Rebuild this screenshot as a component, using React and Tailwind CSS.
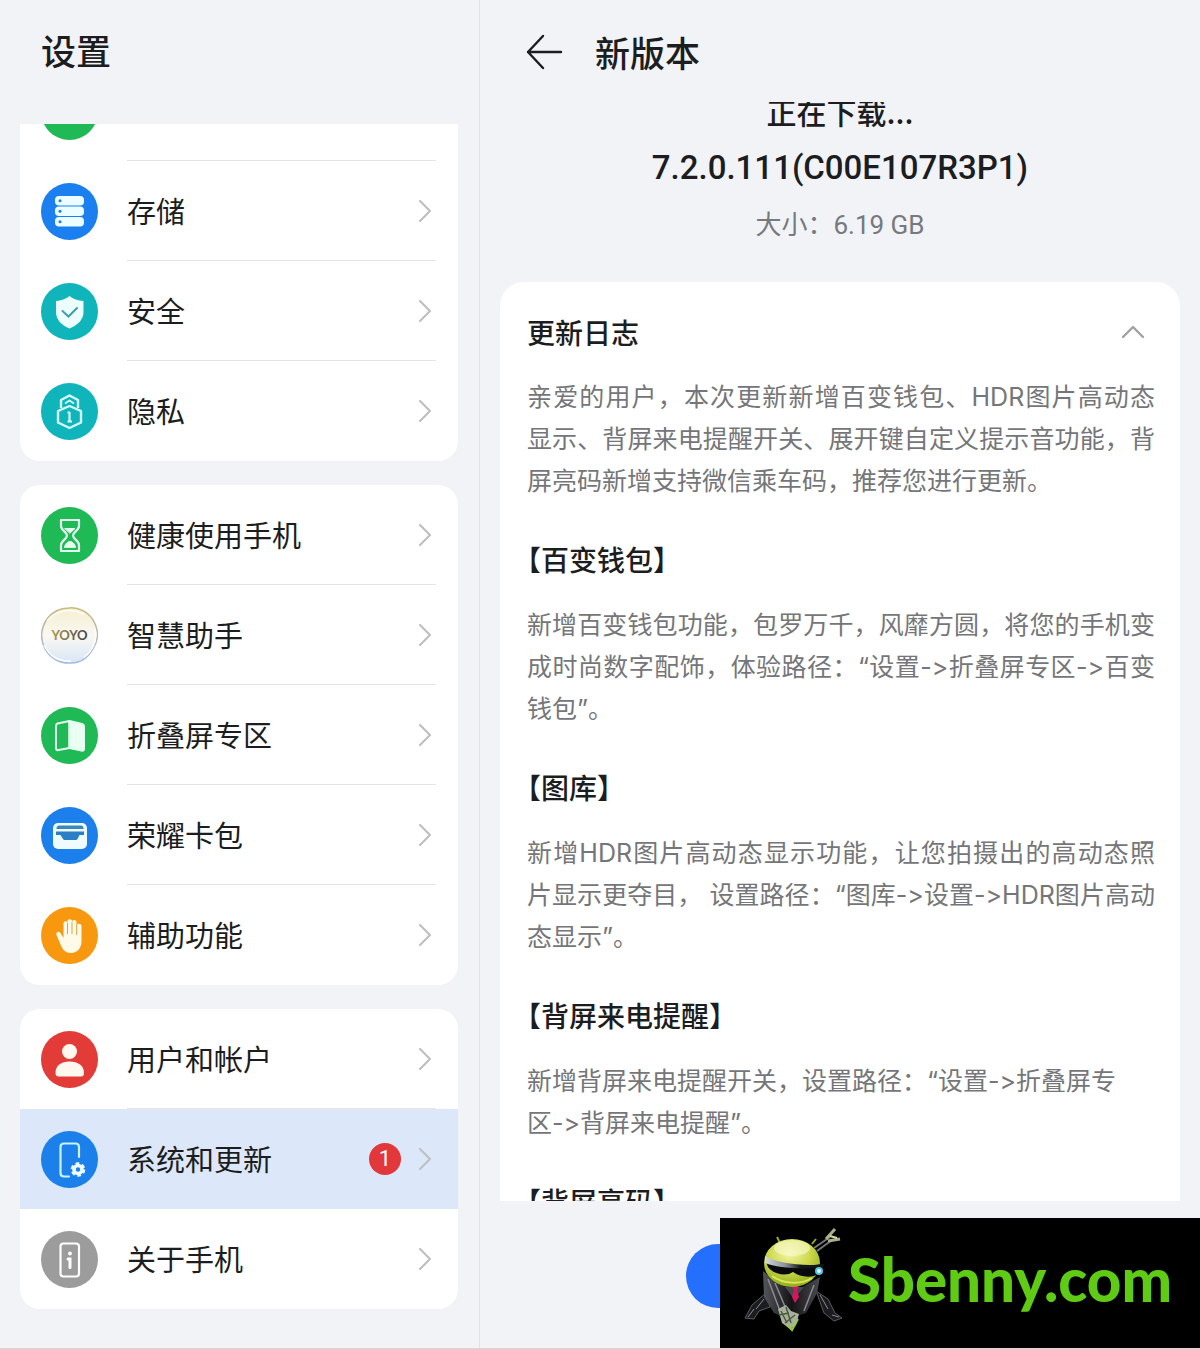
import { useState } from 'react';
import clsx from 'clsx';

const StorageIcon = () => (
  <svg viewBox="0 0 57 57" className="size-full">
    {[13, 23.5, 34].map((y) => (
      <g key={y}>
        <rect x="14" y={y} width="29" height="9.500" rx="4" fill="#ecfdff" />
        <circle cx="19" cy={y + 4.7} r="1.500" fill="#1b7fe6" />
      </g>
    ))}
  </svg>
);

const ShieldIcon = () => (
  <svg viewBox="0 0 57 57" className="size-full">
    <path d="M28.500 13C32 16 37 17.500 42.500 18V29C42.500 37 36 42.500 28.500 45.500C21 42.500 15 37 15 29V18C20 17.500 25 16 28.500 13Z" fill="#ecfefe" />
    <path d="M21.500 28L27.500 33.500L36 25" fill="none" stroke="#3f9ea6" strokeWidth="2" strokeLinecap="round" />
  </svg>
);

const PrivacyIcon = () => (
  <svg viewBox="0 0 57 57" className="size-full" fill="none" stroke="#d5fbfc" strokeWidth="2.400" strokeLinejoin="round">
    <path d="M20 25V17L28.500 12.500L37 17V25" />
    <path d="M24 20.500L28.500 17.500L33 20.500" strokeWidth="1.800" />
    <path d="M28.500 23L40 28V39.500L28.500 45L17 39.500V28Z" />
    <path d="M28.500 29V38.500M26.500 29.500H29M26.500 38.500H31" strokeWidth="2.200" />
  </svg>
);

const HourglassIcon = () => (
  <svg viewBox="0 0 57 57" className="size-full" fill="none" stroke="#e4fff0" strokeWidth="2.200" strokeLinecap="round" strokeLinejoin="round">
    <path d="M20 13H38V19C38 23.500 32 25 32 28.500C32 32 38 34 38 38V44H20V38C20 34 26 32 26 28.500C26 25 20 23.500 20 19Z" />
    <path d="M24 21.500H34L29 26Z" fill="#e4fff0" strokeWidth="1" />
    <path d="M23.500 40C24 36.500 27 34.500 29 34.500C31 34.500 34 36.500 34.500 40Z" fill="#e4fff0" strokeWidth="1" />
  </svg>
);

const YoyoIcon = () => (
  <svg viewBox="0 0 57 57" className="size-full">
    <defs>
      <linearGradient id="orb" x1="0" y1="0" x2="0" y2="1">
        <stop offset="0" stopColor="#f6efd0" />
        <stop offset="0.500" stopColor="#faf8f2" />
        <stop offset="1" stopColor="#d8e6f6" />
      </linearGradient>
      <linearGradient id="orbRing" x1="0" y1="0" x2="0" y2="1">
        <stop offset="0" stopColor="#c9b97c" />
        <stop offset="0.500" stopColor="#b7b8ba" />
        <stop offset="1" stopColor="#9fbbe0" />
      </linearGradient>
      <linearGradient id="orbText" x1="0" y1="0" x2="1" y2="0">
        <stop offset="0" stopColor="#b09a4e" />
        <stop offset="1" stopColor="#3e4148" />
      </linearGradient>
    </defs>
    <path d="M28 1C38 0 47 5 52 13C57 21 58 31 53 40C48 50 40 56 30 56C19 57 9 51 4 42C-1 32 0 21 6 12C11 5 19 1 28 1Z" fill="url(#orb)" stroke="url(#orbRing)" strokeWidth="1.500" />
    <path d="M6 14C14 4 29 0 43 7M3 38C8 49 18 55 30 54M54 22C57 33 51 45 43 50" fill="none" stroke="#fff" strokeWidth="1.500" />
    <text x="28.500" y="33" textAnchor="middle" fontSize="13" fontWeight="700" fontFamily="Lato, sans-serif" fill="url(#orbText)">YOYO</text>
  </svg>
);

const FoldIcon = () => (
  <svg viewBox="0 0 57 57" className="size-full" stroke="#e4fff0" strokeWidth="2" strokeLinejoin="round">
    <path d="M28.500 14L16.500 16.500C15.500 17 15 17.500 15 19V41C15 43 16 43.500 17.500 43L28.500 41Z" fill="none" />
    <path d="M28.500 14L41 17C42.500 17.500 43 18 43 19.500V42C43 43.500 42 44 40.500 43.500L28.500 41Z" fill="#eafff2" />
  </svg>
);

const WalletIcon = () => (
  <svg viewBox="0 0 57 57" className="size-full">
    <rect x="12" y="16" width="34" height="26" rx="5" fill="#eefcff" />
    <path d="M15.500 21C15.500 19.500 17 18.500 18 18.500H40C41.500 18.500 42.500 19.500 42.500 21V22H15.500Z" fill="#3a86bd" />
    <path d="M15 24.500H43V28H38.500L36.500 32C36 32.800 35.500 33 34.500 33H24C23 33 22.500 32.800 22 32L19.500 28H15Z" fill="#2b7fc4" />
  </svg>
);

const HandIcon = () => (
  <svg viewBox="0 0 57 57" className="size-full" fill="#fffbe8">
    <path d="M22.500 28V16.500C22.500 13.500 26.500 13.500 26.500 16.500V14C26.500 11.500 31 11.500 31 14V15C31 12.200 35.500 12.200 35.500 15V18.500C35.500 16 40.500 16 40.500 19V34C40.500 41 36.500 46 30 46C24.500 46 21.500 42.500 19.500 37.500L15.500 28C14.500 25 17.500 23.500 19.500 26L22.500 31Z" />
    <path d="M26.500 16V27M31 15V27M35.700 17V28" stroke="#e3a13c" strokeWidth="1" fill="none" />
  </svg>
);

const UserIcon = () => (
  <svg viewBox="0 0 57 57" className="size-full" fill="#fff8ee">
    <circle cx="28.500" cy="20.500" r="7.500" />
    <path d="M14.500 42C14.500 34.500 20 30.500 28.500 30.500C37 30.500 43 34.500 43 42C43 44.500 42 45.500 40 45.500H17.500C15.500 45.500 14.500 44.500 14.500 42Z" />
  </svg>
);

const UpdateIcon = () => (
  <svg viewBox="0 0 57 57" className="size-full" fill="none" stroke="#c9f4ff" strokeWidth="2.200" strokeLinecap="round">
    <path d="M38 26V16C38 13.500 37 12.500 34.500 12.500H23C20.500 12.500 19.500 13.500 19.500 16V42C19.500 44.500 20.500 45.500 23 45.500H28" />
    <circle cx="37" cy="38.500" r="4" stroke="#effbff" strokeWidth="3.600" />
    <circle cx="37" cy="38.500" r="6" stroke="#effbff" strokeWidth="2.600" strokeLinecap="butt" strokeDasharray="3.642 2.642" />
  </svg>
);

const AboutIcon = () => (
  <svg viewBox="0 0 57 57" className="size-full" fill="none" stroke="#fff" strokeWidth="2.200" strokeLinecap="round">
    <rect x="19.500" y="12.500" width="18.500" height="33" rx="3" />
    <path d="M27 28H29V36.500" strokeWidth="3" />
    <circle cx="29" cy="22.500" r="1.200" fill="#fff" strokeWidth="1.500" />
  </svg>
);

const GROUPS = [
  [
    { id: 'first', label: '', color: 'bg-[#1fb955]', Icon: null },
    { id: 'storage', label: '存储', color: 'bg-[#1b7ff0]', Icon: StorageIcon },
    { id: 'security', label: '安全', color: 'bg-[#0fb5ba]', Icon: ShieldIcon },
    { id: 'privacy', label: '隐私', color: 'bg-[#0fb5ba]', Icon: PrivacyIcon },
  ],
  [
    { id: 'health', label: '健康使用手机', color: 'bg-[#1fb955]', Icon: HourglassIcon },
    { id: 'assistant', label: '智慧助手', color: 'bg-transparent', Icon: YoyoIcon },
    { id: 'fold', label: '折叠屏专区', color: 'bg-[#1fb955]', Icon: FoldIcon },
    { id: 'wallet', label: '荣耀卡包', color: 'bg-[#1b7fec]', Icon: WalletIcon },
    { id: 'access', label: '辅助功能', color: 'bg-[#f8980f]', Icon: HandIcon },
  ],
  [
    { id: 'account', label: '用户和帐户', color: 'bg-[#e23b38]', Icon: UserIcon },
    { id: 'system', label: '系统和更新', color: 'bg-[#1b80ea]', Icon: UpdateIcon, badge: 1 },
    { id: 'about', label: '关于手机', color: 'bg-[#9c9c9c]', Icon: AboutIcon },
  ],
];

const LOG = [
  {
    lines: [
      '亲爱的用户，本次更新新增百变钱包、HDR图片高动态',
      '显示、背屏来电提醒开关、展开键自定义提示音功能，背',
      '屏亮码新增支持微信乘车码，推荐您进行更新。',
    ],
  },
  {
    title: '【百变钱包】',
    lines: [
      '新增百变钱包功能，包罗万千，风靡方圆，将您的手机变',
      '成时尚数字配饰，体验路径：“设置->折叠屏专区->百变',
      '钱包”。',
    ],
  },
  {
    title: '【图库】',
    lines: [
      '新增HDR图片高动态显示功能，让您拍摄出的高动态照',
      '片显示更夺目， 设置路径：“图库->设置->HDR图片高动',
      '态显示”。',
    ],
  },
  {
    title: '【背屏来电提醒】',
    lines: ['新增背屏来电提醒开关，设置路径：“设置->折叠屏专', '区->背屏来电提醒”。'],
    ragged: true,
  },
  { title: '【背屏亮码】', lines: [] },
];

function SettingsRow({ item, selected, last, onSelect }) {
  const { label, color, Icon, badge } = item;
  return (
    <button
      type="button"
      onClick={onSelect}
      className={clsx('flex h-[100px] w-full items-center gap-[29px] pl-[21px] text-left', selected && 'bg-[#dce8f9]')}
    >
      <span className={clsx('size-[57px] shrink-0 rounded-full', color)}>{Icon && <Icon />}</span>
      <span className={clsx('mr-[22px] flex h-full flex-1 items-center border-b', last || selected ? 'border-transparent' : 'border-[#e4e4e6]')}>
        <span className="flex-1 text-[29px] text-[#1c1d20]">{label}</span>
        {badge && (
          <span className="mr-4 flex size-8 items-center justify-center rounded-full bg-[#e2373b] font-[Roboto,sans-serif] text-[22px] text-white">
            {badge}
          </span>
        )}
        {label && (
          <svg viewBox="0 0 16 24" className="mr-[3px] h-6 w-4" fill="none" stroke="#bfc0c3" strokeWidth="2.200" strokeLinecap="round" strokeLinejoin="round">
            <path d="M3 2L13 12L3 22" />
          </svg>
        )}
      </span>
    </button>
  );
}

const Mascot = () => (
  <svg viewBox="0 0 104 112" className="h-28 w-[104px] shrink-0">
    <defs>
      <radialGradient id="head" cx="0.450" cy="0.300" r="0.750">
        <stop offset="0" stopColor="#f4f4a8" />
        <stop offset="0.500" stopColor="#cdd84a" />
        <stop offset="1" stopColor="#86a516" />
      </radialGradient>
      <linearGradient id="visor" x1="0" y1="0" x2="1" y2="0">
        <stop offset="0" stopColor="#d5dae2" />
        <stop offset="0.350" stopColor="#8b8f98" />
        <stop offset="0.600" stopColor="#15161a" />
      </linearGradient>
      <linearGradient id="suit" x1="0" y1="0" x2="1" y2="0">
        <stop offset="0" stopColor="#55565b" />
        <stop offset="0.500" stopColor="#141416" />
        <stop offset="1" stopColor="#4a4b50" />
      </linearGradient>
    </defs>
    {/* raised hand behind the head */}
    <path d="M70 21L86 10M73 24L88 13" stroke="#73767c" strokeWidth="2" />
    <path d="M82 12L91 2M84 14L96 12" stroke="#a9b08c" strokeWidth="3" />
    <path d="M86 9L93 11" stroke="#d6dba6" strokeWidth="2" />
    {/* legs and arms */}
    <path d="M22 66L8 78L1 91L10 92L15 84L26 80Z" fill="#1b1c1f" stroke="#5b5c61" />
    <path d="M10 82L4 90M20 72L12 82" stroke="#8b8c92" />
    <path d="M72 64L84 72L91 86L98 91L90 94L80 86Z" fill="#1b1c1f" stroke="#5b5c61" />
    <path d="M76 68L84 82M88 88L95 90" stroke="#8b8c92" />
    <path d="M19 44L20 70L30 86L44 92L62 86L73 66L76 50L58 60L36 58Z" fill="url(#suit)" />
    <path d="M24 52L36 84M31 56L42 82M70 58L60 84" stroke="#8b8c92" strokeWidth="1.500" />
    <path d="M41 60L50 72L60 60Z" fill="#48494e" />
    <path d="M46 58H55L53 63L55 70L51 76L48 70L50 63Z" fill="#d4165d" />
    {/* clasped hands */}
    <path d="M34 82L42 78L47 84L55 87L52 98L46 102L38 96Z" fill="#a8b19d" />
    <path d="M37 84L43 96M42 80L47 96M35 88L45 86M41 96L51 88" stroke="#4b5a3d" strokeWidth="1.500" />
    <path d="M43 98L48 103L54 92" fill="none" stroke="#9acb38" strokeWidth="2" />
    {/* head */}
    <path d="M37 18L33 10M68 17L72 12" stroke="#91aa32" strokeWidth="2" />
    <ellipse cx="48" cy="36" rx="28" ry="24" fill="url(#head)" />
    <ellipse cx="48" cy="21" rx="18" ry="8" fill="#fafbd0" opacity="0.600" />
    <path d="M21 32C32 38 60 41 78 37L76 46C68 52 56 50 49 45C42 50 29 47 24 40Z" fill="#08090c" />
    <path d="M21 29C32 36 60 40 80 37L79 40C58 43 34 41 21 36Z" fill="url(#visor)" />
    <path d="M28 49C39 57 57 58 68 51" fill="none" stroke="#dce65a" strokeWidth="2" />
    <circle cx="75" cy="44" r="4" fill="#53bfe6" />
    <circle cx="75" cy="44" r="2" fill="#e2faff" />
  </svg>
);

export default function App() {
  const [selected, setSelected] = useState('system');
  const [open, setOpen] = useState(true);

  return (
    <div className="relative flex h-screen overflow-hidden border-b border-[#d6d7d9] bg-[#f1f3f7] font-['Noto_Sans_CJK_SC',sans-serif] text-[#1c1d20]">
      <aside className="flex w-2/5 flex-col border-r border-[#e0e2e6] pr-[21px] pl-5">
        <h1 className="flex h-[124px] shrink-0 items-start px-[21px] pt-[26px] text-[35px] leading-[48px] font-medium">设置</h1>
        {/* list is scrolled to its end */}
        <nav className="flex min-h-0 flex-1 flex-col justify-end gap-6 overflow-hidden pb-[39px]">
          {GROUPS.map((group, g) => (
            <div key={g} className="shrink-0 overflow-hidden rounded-[20px] bg-white">
              {group.map((item, i) => (
                <SettingsRow
                  key={item.id}
                  item={item}
                  selected={item.id === selected}
                  last={i === group.length - 1}
                  onSelect={() => setSelected(item.id)}
                />
              ))}
            </div>
          ))}
        </nav>
      </aside>

      <main className="flex min-w-0 flex-1 flex-col px-5">
        <header className="flex h-[102px] shrink-0 items-start gap-8 pt-7 pl-[26px]">
          <button type="button" aria-label="返回" className="flex h-12 items-center">
            <svg viewBox="0 0 37 36" className="h-9 w-[37px]" fill="none" stroke="#1c1d20" strokeWidth="2.400" strokeLinecap="round" strokeLinejoin="round">
              <path d="M17 2L2 18L17 34M2 18H35" />
            </svg>
          </button>
          <h2 className="text-[35px] leading-[48px] font-medium">新版本</h2>
        </header>

        <div className="min-h-0 flex-1 overflow-hidden">
          <div className="-mt-3 mb-9 flex flex-col items-center gap-[15px] leading-[42px]">
            <p className="text-[30px] font-medium">正在下载...</p>
            <p className="font-[Roboto,sans-serif] text-[33px] font-medium">7.2.0.111(C00E107R3P1)</p>
            <p className="font-[Roboto,'Noto_Sans_CJK_SC',sans-serif] text-[26px] text-[#77797d]">大小：6.19 GB</p>
          </div>

          <section className="rounded-t-[24px] bg-white pt-7 pr-[25px] pb-10 pl-[27px]">
            <button
              type="button"
              aria-expanded={open}
              onClick={() => setOpen(!open)}
              className="mb-[22px] flex h-11 w-full items-center justify-between pr-2.5"
            >
              <span className="text-[28px] font-medium">更新日志</span>
              <svg viewBox="0 0 24 14" className={clsx('h-3.5 w-6', !open && 'rotate-180')} fill="none" stroke="#a0a1a4" strokeWidth="2.400" strokeLinecap="round" strokeLinejoin="round">
                <path d="M2 12L12 2L22 12" />
              </svg>
            </button>
            {open && LOG.map(({ title, lines, ragged }, s) => (
              <div key={s} className="leading-[42px]">
                {title && <h3 className="mt-9 mb-6 text-[28px] leading-[42px] font-medium [text-spacing-trim:trim-start]">{title}</h3>}
                <p className="font-[Inter,'Noto_Sans_CJK_SC',sans-serif] text-[25px] text-[#757679] [font-feature-settings:'calt'_0]">
                  {lines.map((line, i) => (
                    <span
                      key={line}
                      className={clsx('block whitespace-nowrap', !ragged && i < lines.length - 1 && 'text-justify [text-align-last:justify]')}
                    >
                      {line}
                    </span>
                  ))}
                </p>
              </div>
            ))}
          </section>
        </div>

        <footer className="flex h-[147px] shrink-0 items-start justify-center pt-[43px]">
          <button type="button" aria-label="下载" className="h-16 w-[308px] rounded-full bg-[#256fff]" />
        </footer>
      </main>

      <div className="absolute right-0 bottom-0 flex h-[130px] w-[480px] items-center bg-black pl-6">
        <Mascot />
        <span className="pb-2 font-[Lato,sans-serif] text-[60px] leading-none font-black text-[#5fcb14]">Sbenny.com</span>
      </div>
    </div>
  );
}
